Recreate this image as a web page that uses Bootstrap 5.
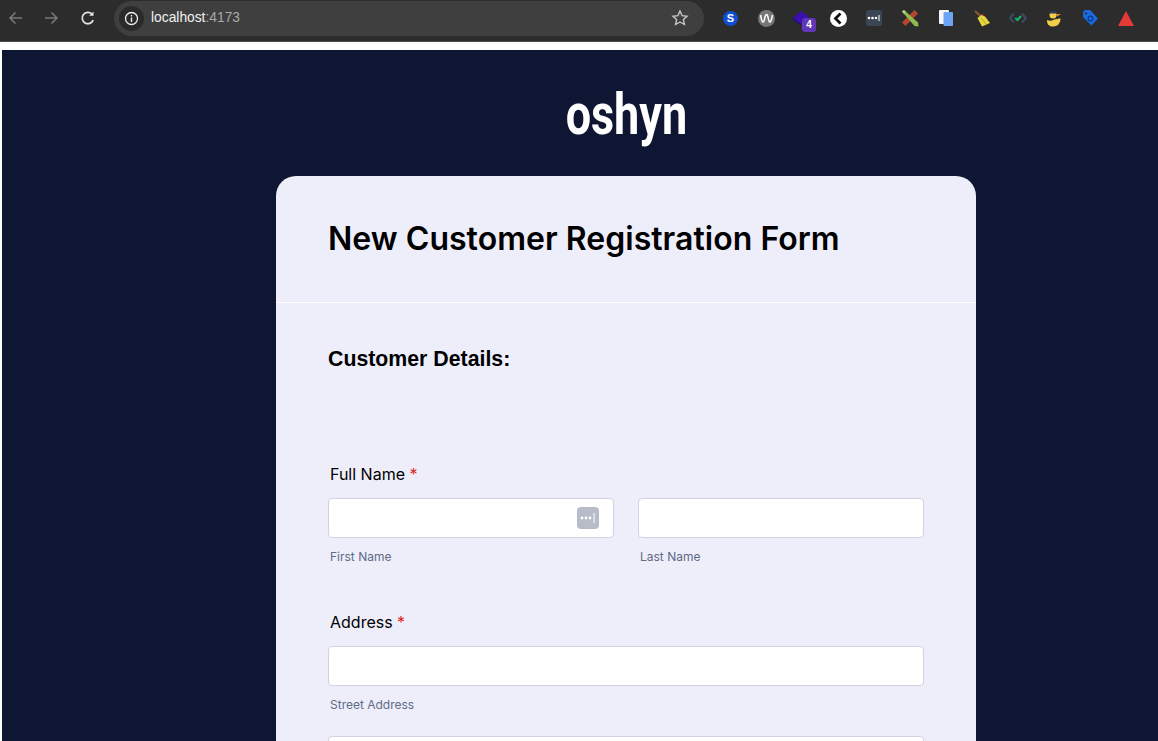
<!DOCTYPE html>
<html lang="en">
<head>
<meta charset="utf-8">
<title>New Customer Registration Form</title>
<link href="https://cdn.jsdelivr.net/npm/bootstrap@5.3.0/dist/css/bootstrap.min.css" rel="stylesheet">
<style>
html,body{height:741px;overflow:hidden;background:#fff}
body{font-family:Inter,"Liberation Sans",sans-serif;color:#000}
.chrome-bar{height:42px;background:#2c2c2c;border-bottom:1px solid #4a4a4a;padding-left:7px;padding-bottom:5px;overflow:hidden}
.nav-btn{width:18px;height:18px;display:block;flex:none}
.back-btn{margin-right:17px}
.fwd-btn{margin-right:19px}
.reload-btn{margin-right:17px}
.omnibox{width:590px;height:35px;background:#3f3f3f;border-radius:18px;padding-left:5px;padding-right:15px;flex:none}
.info-dot{width:25px;height:25px;background:#2a2a2a;border-radius:50%;flex:none;margin-right:7px}
.url-host{font-family:"Liberation Sans",Arial,sans-serif;font-size:13.8px;color:#f1f1f1}
.url-port{color:#a8a8a8}
.ext-row{margin-left:8px}
.ext-icon{width:36px;height:20px;flex:none;display:flex;align-items:center;justify-content:center;position:relative}
.ext-count{position:absolute;left:18px;top:10px;width:14px;height:14px;background:#6236b8;color:#fff;border-radius:3px;font:700 10px/14px "Liberation Sans",sans-serif;text-align:center}
.white-gap{height:8px}
.page-bg{background:#0e1633;margin-left:2px;height:691px;overflow:hidden}
.logo-wrap{width:700px;margin-left:274px;height:126px;padding-top:29px}
.logo-text{font-family:Roboto,"Liberation Sans",sans-serif;font-weight:700;font-size:58px;line-height:70px;color:#fff;display:inline-block;transform:scaleX(.775);transform-origin:center}
.form-card{width:700px;margin-left:274px;background:#eeeefb;border-radius:20px 20px 0 0;min-height:600px}
.form-head{height:127px;border-bottom:1px solid #fff;padding:41px 52px 0}
.form-title{font-family:Inter,sans-serif;font-weight:600;font-size:32px;line-height:44px;letter-spacing:.03px;margin:0;color:#000}
.form-body{padding:44px 52px 0}
.section-name{font-family:"Liberation Sans",Arial,sans-serif;font-weight:700;font-size:21.3px;line-height:24px;margin:0 0 91px;color:#000}
.field-label{font-size:16px;line-height:24px;font-weight:400;color:#000;margin:0 0 12px 2px;display:block}
.req-star{color:#e0241c}
.text-box{height:40px;border:1px solid #d1d3e2;border-radius:4px;background:#fff;padding-right:14px}
.name-row{--bs-gutter-x:24px}
.hint-text{font-size:12px;line-height:16px;color:#5e6b85;margin:11px 0 0 2px;display:block}
.field-group{margin-bottom:45px}
.pw-key{width:22px;height:22px;background:#b7bcc8;border-radius:4px;flex:none}
.next-box{margin-top:23px}
</style>
</head>
<body>
<div class="chrome-bar d-flex align-items-center">
  <svg class="nav-btn back-btn" viewBox="0 0 18 18" fill="none" stroke="#777" stroke-width="1.6"><path d="M15 9H3M8.500 3.500L3 9l5.500 5.500"/></svg>
  <svg class="nav-btn fwd-btn" viewBox="0 0 18 18" fill="none" stroke="#777" stroke-width="1.6"><path d="M3 9h12M9.500 3.500L15 9l-5.500 5.500"/></svg>
  <svg class="nav-btn reload-btn" viewBox="0 0 18 18" fill="none" stroke="#e6e6e6" stroke-width="1.700"><path d="M14.200 11.200A5.700 5.700 0 1 1 13 5"/><path d="M14.500 2.500v4.300h-4.300z" fill="#e6e6e6" stroke="none"/></svg>
  <div class="omnibox d-flex align-items-center">
    <div class="info-dot d-flex align-items-center justify-content-center">
      <svg width="15" height="15" viewBox="0 0 15 15" fill="none"><circle cx="7.500" cy="7.500" r="6" stroke="#eee" stroke-width="1.300"/><path d="M7.500 6.500v4.500M7.500 4v1.400" stroke="#eee" stroke-width="1.400"/></svg>
    </div>
    <span class="url-host">localhost<span class="url-port">:4173</span></span>
    <svg class="ms-auto" width="18" height="18" viewBox="0 0 18 18" fill="none" stroke="#c6c6c6" stroke-width="1.400"><path d="M9 2l2.100 4.600 5 .6-3.700 3.400 1 4.900L9 13l-4.400 2.500 1-4.900L1.900 7.200l5-.6z"/></svg>
  </div>
  <div class="ext-row d-flex align-items-center">
    <div class="ext-icon"><svg width="15" height="15" viewBox="0 0 15 15"><circle cx="7.500" cy="7.500" r="7.500" fill="#0f4fd6"/><text x="7.500" y="11.300" text-anchor="middle" font-family="Liberation Sans" font-weight="700" font-size="11" fill="#fff">S</text></svg></div>
    <div class="ext-icon"><svg width="17" height="17" viewBox="0 0 17 17"><circle cx="8.500" cy="8.500" r="8.500" fill="#777"/><path d="M2.500 5c.8 4.500 1.600 7 2.800 7 1.500 0 1.200-7.500 3.200-7.500s1.700 7.500 3.200 7.500c1.200 0 2-2.500 2.800-7" fill="none" stroke="#fff" stroke-width="1.500"/></svg></div>
    <div class="ext-icon"><svg width="18" height="16" viewBox="0 0 18 16"><path d="M0 8l8-7 8 6-8 7z" fill="#3b0fb0"/><path d="M0 8l8 6v2L0 10z" fill="#241078"/></svg><span class="ext-count">4</span></div>
    <div class="ext-icon"><svg width="17" height="17" viewBox="0 0 17 17"><circle cx="8.500" cy="8.500" r="8.500" fill="#fff"/><path d="M10.500 3.500L5.500 8.500l5 5" fill="none" stroke="#111" stroke-width="2.800"/></svg></div>
    <div class="ext-icon"><svg width="16" height="16" viewBox="0 0 16 16"><rect width="16" height="16" rx="2" fill="#3a4654"/><circle cx="3" cy="8" r="1.300" fill="#fff"/><circle cx="6.500" cy="8" r="1.300" fill="#fff"/><circle cx="10" cy="8" r="1.300" fill="#fff"/><path d="M13 5v6" stroke="#fff"/></svg></div>
    <div class="ext-icon"><svg width="18" height="18" viewBox="0 0 18 18"><path d="M13.500 1L17 4.500 4.500 17 1 13.500z" fill="#b5452f"/><path d="M1 2.500L3 1l14 12.500.5 4-4-.5z" fill="#8fbb4e"/><path d="M1 2.500L3 1l2 2-2 2z" fill="#b9c98a"/></svg></div>
    <div class="ext-icon"><svg width="14" height="16" viewBox="0 0 14 16"><rect width="10" height="14" rx="1" fill="#f6f6f6"/><rect x="4.500" y="2" width="9.500" height="14" rx="1" fill="#6aa5f5"/></svg></div>
    <div class="ext-icon"><svg width="17" height="17" viewBox="0 0 17 17"><path d="M1 1l5 4.500" stroke="#8a5a2a" stroke-width="2.200"/><path d="M5.500 5.500l3-1.500 2 2z" fill="#c0392b"/><path d="M7 5l4 1.500 5 6.500-8 3.500L3.500 8z" fill="#e6d63f"/><path d="M7 8l5 6" stroke="#b8a826"/></svg></div>
    <div class="ext-icon"><svg width="18" height="12" viewBox="0 0 18 12" fill="none"><path d="M5 1.500L1 6l4 4.500M13 1.500L17 6l-4 4.500" stroke="#3d4a63" stroke-width="2"/><path d="M6.300 6L8.500 8 12 4" stroke="#16b06c" stroke-width="2.200"/></svg></div>
    <div class="ext-icon"><svg width="15" height="17" viewBox="0 0 15 17"><circle cx="6" cy="5" r="3.500" fill="#f2cd49"/><path d="M0 10c2 1 5 1 6 0 3-1 6-1.500 7.500-1.500 0 5-3 8-7.500 8S0 14 0 10z" fill="#f2cd49"/><path d="M9 4h5l-4 2.500z" fill="#e88a2a"/><path d="M3 1h6v2.500H3z" fill="#2f3d52"/></svg></div>
    <div class="ext-icon"><svg width="16" height="16" viewBox="0 0 16 16"><path d="M1 2l2-2h5l8 8.500-6.500 7L1 7z" fill="#1a6ae0"/><circle cx="8.500" cy="8.500" r="2.400" fill="none" stroke="#0b3a8c" stroke-width="1.300"/><circle cx="4" cy="3.500" r="1.100" fill="#2c2c2c"/></svg></div>
    <div class="ext-icon"><svg width="16" height="15" viewBox="0 0 16 15"><path d="M8 0l8 15H0z" fill="#e53935"/></svg></div>
    <div class="ext-icon"><svg width="6" height="16" viewBox="0 0 6 16" fill="#e8e8e8"><rect width="6" height="4" y="2"/><rect width="6" height="4" y="10"/></svg></div>
  </div>
</div>
<div class="white-gap"></div>
<main class="page-bg">
  <div class="logo-wrap text-center"><span class="logo-text">oshyn</span></div>
  <div class="form-card">
    <header class="form-head"><h1 class="form-title">New Customer Registration Form</h1></header>
    <form class="form-body">
      <h2 class="section-name">Customer Details:</h2>
      <div class="field-group">
        <label class="field-label">Full Name <span class="req-star">*</span></label>
        <div class="row name-row">
          <div class="col-6">
            <div class="text-box d-flex align-items-center justify-content-end">
              <div class="pw-key d-flex align-items-center justify-content-center">
                <svg width="18" height="10" viewBox="0 0 18 10"><circle cx="3" cy="5" r="1.400" fill="#fff"/><circle cx="7" cy="5" r="1.400" fill="#fff"/><circle cx="11" cy="5" r="1.400" fill="#fff"/><path d="M15 0v10" stroke="#fff"/></svg>
              </div>
            </div>
            <span class="hint-text">First Name</span>
          </div>
          <div class="col-6">
            <div class="text-box"></div>
            <span class="hint-text">Last Name</span>
          </div>
        </div>
      </div>
      <div class="field-group">
        <label class="field-label">Address <span class="req-star">*</span></label>
        <div class="text-box"></div>
        <span class="hint-text">Street Address</span>
        <div class="text-box next-box"></div>
      </div>
    </form>
  </div>
</main>
</body>
</html>
